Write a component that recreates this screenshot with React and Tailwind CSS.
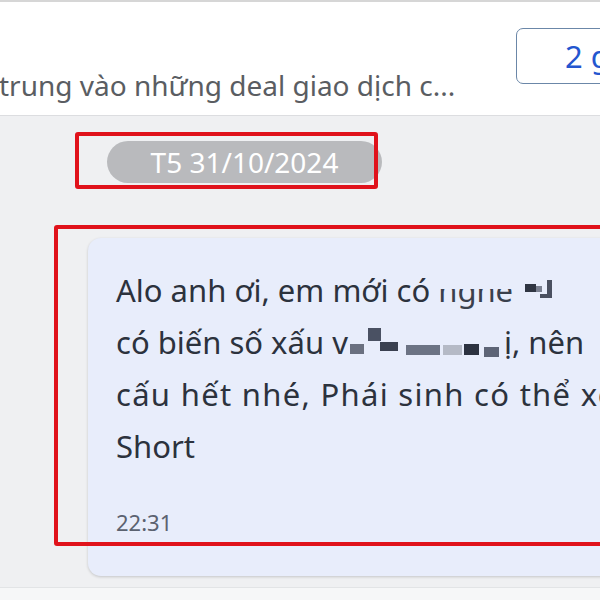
import React from "react";

const font = { fontFamily: '"Noto Sans", "Open Sans", Arial, sans-serif' };

// pixelated (censored) part of the message
function Mosaic({ w, cells }) {
  return (
    <span className="relative inline-block h-[52px] align-top" style={{ width: w }}>
      {cells.map((c, i) => (
        <span
          key={i}
          className="absolute"
          style={{ left: c[0], top: c[1], width: c[2], height: c[3], background: c[4] }}
        />
      ))}
    </span>
  );
}

export default function App() {
  return (
    <div className="relative w-[600px] h-[600px] overflow-hidden bg-white flex flex-col" style={font}>
      <div className="h-[2px] bg-[#d6d6d6]" />

      {/* header */}
      <div className="h-[113px] flex items-start justify-between bg-white">
        <div className="mt-[66px] -ml-[1px] text-[28px] leading-[34px] text-[#5a5d62] whitespace-nowrap">
          trung vào những deal giao dịch c...
        </div>
        <div className="mt-[26px] -mr-[40px] w-[124px] h-[56px] rounded-[7px] border-[1.5px] border-[#6b87a8] flex items-center pl-[48px] text-[31px] text-[#2456cf] whitespace-nowrap">
          2 g
        </div>
      </div>

      <div className="h-[1px] bg-[#dcdde0]" />

      {/* chat area */}
      <div className="flex-1 bg-[#eff0f2] flex flex-col">
        <div className="mt-[25px] ml-[107px] w-[275px] h-[42px] rounded-full bg-[#b9babd] flex items-center justify-center text-[28px] text-white">
          T5 31/10/2024
        </div>

        <div className="mt-[55px] ml-[88px] w-[560px] h-[338px] rounded-[13px] bg-[#e8edfb] shadow-[0_1px_3px_rgba(0,0,0,0.18)] pl-[28px] pt-[26px] text-[#2c323d]">
          <div className="text-[31px] leading-[52px] whitespace-nowrap">
            <div>
              Alo anh ơi, em mới có{" "}
              <span className="relative inline-block text-[#3a404c]">
                nghe
                <span className="absolute left-0 right-0 top-0 h-[25px] bg-[#e8edfb]" />
              </span>{" "}
              <Mosaic
                w={40}
                cells={[
                  [4, 20, 11, 8, "#2f3542"],
                  [15, 22, 6, 6, "#7a8090"],
                  [26, 16, 5, 16, "#4a5060"],
                  [19, 30, 12, 4, "#4a5060"],
                ]}
              />
            </div>
            <div>
              có biến số xấu v
              <Mosaic
                w={156}
                cells={[
                  [2, 28, 14, 10, "#6a7080"],
                  [20, 12, 13, 13, "#4a5163"],
                  [32, 26, 18, 9, "#3a4050"],
                  [58, 29, 34, 10, "#6c7384"],
                  [95, 29, 19, 10, "#b5bac6"],
                  [116, 28, 15, 11, "#2c3240"],
                  [136, 31, 15, 10, "#5d6476"],
                ]}
              />
              ị, nên
            </div>
            <div className="tracking-[1.3px]">cấu hết nhé, Phái sinh có thể xem</div>
            <div>Short</div>
          </div>
          <div className="mt-[36px] text-[22px] leading-[28px] text-[#5b6270]">22:31</div>
        </div>

        <div className="mt-[11px] h-[1px] bg-[#e2e4e6]" />
        <div className="flex-1 bg-[#f6f7f8]" />
      </div>

      {/* red annotation boxes */}
      <div className="absolute left-[75px] top-[132px] w-[303px] h-[57px] border-[4px] border-[#e0121b] rounded-[3px]" />
      <div className="absolute left-[54px] top-[225px] w-[560px] h-[321px] border-[4px] border-[#e0121b] rounded-[3px]" />
    </div>
  );
}
